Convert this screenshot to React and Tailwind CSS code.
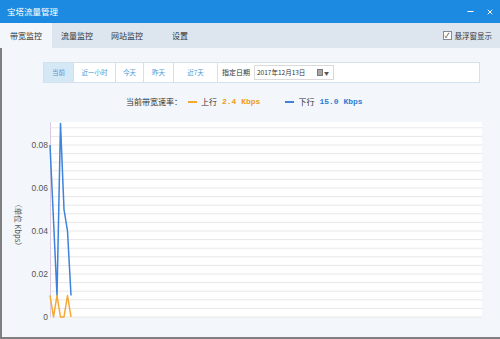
import { Minus, X } from 'lucide-react'

const tabs = [
  { label: '带宽监控', w: 'w-[52px]', active: true },
  { label: '流量监控', w: 'w-[50px]' },
  { label: '网站监控', w: 'w-[50px]' },
  { label: '设置', w: 'w-[56px]' },
]

const ranges = [
  { label: '当前', w: 'w-[30px]', active: true },
  { label: '近一小时', w: 'w-[42px]' },
  { label: '今天', w: 'w-[28px]' },
  { label: '昨天', w: 'w-[30px]' },
  { label: '近7天', w: 'w-[44px]' },
]

// chart values, one sample every 3.5px
const up = [0.01, 0, 0.01, 0, 0, 0.01, 0]
const down = [0.08, 0.045, 0.01, 0.09, 0.05, 0.04, 0.01]

const Y0 = 202
const toY = (v) => Y0 - v * 2150
const toX = (i) => 48 + i * 3.5
const points = (arr) => arr.map((v, i) => `${toX(i)},${toY(v)}`).join(' ')

const Chart = () => {
  const grid = []
  for (let k = 0; k <= 22; k++) grid.push(Y0 - k * 8.6)
  const ticks = [
    { v: 0.08, t: '0.08' },
    { v: 0.06, t: '0.06' },
    { v: 0.04, t: '0.04' },
    { v: 0.02, t: '0.02' },
    { v: 0, t: '0' },
  ]

  return (
    <svg width="496" height="212" className="block">
      <rect x="48" y="7" width="432" height="195" fill="#ffffff" />
      {grid.map((y) => (
        <line key={y} x1="48" x2="480" y1={y} y2={y} stroke="#e7e7e7" strokeWidth="1" />
      ))}
      <line x1="48.5" x2="48.5" y1="7" y2="202" stroke="#dccbe3" strokeWidth="1" />
      {ticks.map((tk) => (
        <text
          key={tk.t}
          x="46"
          y={toY(tk.v) + 3}
          textAnchor="end"
          fontSize="8.5"
          fill="#555"
          fontFamily="Liberation Sans, sans-serif"
        >
          {tk.t}
        </text>
      ))}
      <text
        x="0"
        y="0"
        transform="translate(13 110) rotate(90)"
        textAnchor="middle"
        fontSize="7.5"
        fill="#555"
        fontFamily="Noto Sans CJK SC, sans-serif"
      >
        （单位 Kbps）
      </text>
      <polyline points={points(down)} fill="none" stroke="#3d82db" strokeWidth="1.5" strokeLinejoin="round" />
      <polyline points={points(up)} fill="none" stroke="#f5a733" strokeWidth="1.5" strokeLinejoin="round" />
    </svg>
  )
}

export default function App() {
  return (
    <div className="w-[500px] h-[339px] overflow-hidden flex flex-col bg-[#f3f7fb] font-['Noto_Sans_CJK_SC',sans-serif] text-[#333]">
      {/* title bar */}
      <div className="h-[23px] shrink-0 bg-[#1b8ae0] flex items-center pl-[7px] pr-[6px] text-white">
        <span className="text-[8.5px] leading-none">宝塔流量管理</span>
        <div className="ml-auto flex items-center gap-[11px]">
          <Minus size={9} strokeWidth={3} />
          <X size={8} strokeWidth={3} />
        </div>
      </div>

      {/* tabs */}
      <div className="h-[25px] shrink-0 bg-[#dde6ef] flex items-stretch text-[8px]">
        {tabs.map((t) => (
          <div
            key={t.label}
            className={`${t.w} flex items-center justify-center ${t.active ? 'bg-[#f3f7fb]' : ''}`}
          >
            {t.label}
          </div>
        ))}
        <div className="ml-auto flex items-center gap-[3px] pr-[8px] text-[7.5px]">
          <span className="w-[9px] h-[9px] border border-[#8a8a8a] bg-white flex items-center justify-center text-[7px] leading-none">
            ✓
          </span>
          <span>悬浮窗显示</span>
        </div>
      </div>

      {/* content */}
      <div className="flex-1 flex flex-col border-l-2 border-b-2 border-[#7f7f7f]">
        <div className="mt-[14px] ml-[41px] w-[437px] h-[21px] flex items-stretch bg-white border border-[#d3e1ec] text-[6.5px]">
          {ranges.map((r) => (
            <div
              key={r.label}
              className={`${r.w} flex items-center justify-center border-r border-[#d3e1ec] text-[#4d9ad6] ${r.active ? 'bg-[#d5e8f6]' : ''}`}
            >
              {r.label}
            </div>
          ))}
          <div className="flex items-center pl-[4px] gap-[4px] text-[#333] text-[7px] whitespace-nowrap">
            <span>指定日期</span>
            <div className="w-[80px] h-[15px] border border-[#dadada] flex items-center pl-[2px] pr-[4px]">
              <span className="text-[6.5px]">2017年12月13日</span>
              <span className="ml-auto w-[6px] h-[7px] bg-[#a5a5a5] border border-[#7a7a7a]" />
              <span className="ml-[1px] text-[5px] text-[#555]">▼</span>
            </div>
          </div>
        </div>

        <div className="mt-[12px] h-[14px] flex items-center text-[8px] whitespace-nowrap">
          <span className="ml-[124px]">当前带宽速率：</span>
          <span className="ml-[6px] w-[9px] h-[2px] bg-[#f5a733]" />
          <span className="ml-[4px]">上行</span>
          <span className="ml-[5px] text-[8px] font-bold text-[#f09a22] font-['Liberation_Mono',monospace]">2.4 Kbps</span>
          <span className="ml-[25px] w-[9px] h-[2px] bg-[#3d82db]" />
          <span className="ml-[4px]">下行</span>
          <span className="ml-[5px] text-[8px] font-bold text-[#2f7bd0] font-['Liberation_Mono',monospace]">15.0 Kbps</span>
        </div>

        <div className="mt-[6px]">
          <Chart />
        </div>
      </div>
    </div>
  )
}
